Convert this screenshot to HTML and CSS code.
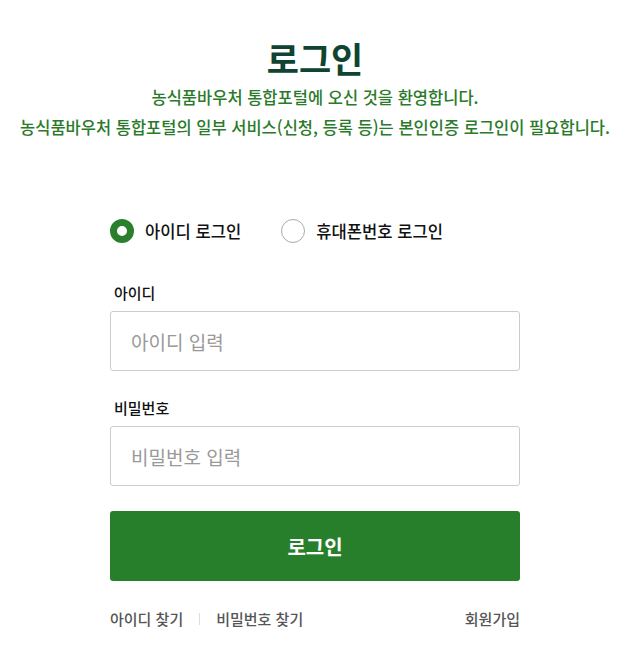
FILE: index.html
```html
<!DOCTYPE html>
<html lang="ko">
<head>
  <meta charset="UTF-8">
  <title>로그인</title>
  <link rel="stylesheet" href="styles.css">
</head>
<body>
  <div class="wrap">
    <div class="head">
      <h2>로그인</h2>
      <p>농식품바우처 통합포털에 오신 것을 환영합니다.<br>농식품바우처 통합포털의 일부 서비스(신청, 등록 등)는 본인인증 로그인이 필요합니다.</p>
    </div>

    <div class="form">
      <div class="radio-group">
        <label class="radio"><input type="radio" name="type" checked><span class="mark"></span>아이디 로그인</label>
        <label class="radio"><input type="radio" name="type"><span class="mark"></span>휴대폰번호 로그인</label>
      </div>

      <label class="field-label" for="userId">아이디</label>
      <input type="text" id="userId" class="field" placeholder="아이디 입력">

      <label class="field-label pw" for="userPw">비밀번호</label>
      <input type="password" id="userPw" class="field" placeholder="비밀번호 입력">

      <button class="btn-login">로그인</button>

      <div class="links">
        <a href="#">아이디 찾기</a>
        <span class="bar"></span>
        <a href="#">비밀번호 찾기</a>
        <a href="#" class="join">회원가입</a>
      </div>
    </div>
  </div>
</body>
</html>
```

FILE: styles.css
```css
body {
  margin: 0;
  font-family: "Noto Sans CJK KR", "Noto Sans", sans-serif;
  background: #fff;
  color: #111;
}
.wrap {
  width: 630px;
  padding-top: 36px;
}
.head {
  text-align: center;
}
.head h2 {
  margin: 0;
  font-size: 35px;
  line-height: 44px;
  font-weight: 700;
  color: #0e4430;
}
.head p {
  margin: 2px 0 0;
  font-size: 16.5px;
  line-height: 30px;
  font-weight: 500;
  color: #2a7a2a;
}
.form {
  width: 410px;
  margin: 77px auto 0;
}
.radio-group {
  display: flex;
  gap: 40px;
  height: 24px;
  align-items: center;
}
.radio {
  display: flex;
  align-items: center;
  gap: 11px;
  font-size: 16.6px;
  font-weight: 500;
  cursor: pointer;
}
.radio input {
  display: none;
}
.radio .mark {
  width: 24px;
  height: 24px;
  box-sizing: border-box;
  border-radius: 50%;
  border: 1px solid #aaa;
  background: #fff;
}
.radio input:checked + .mark {
  border: 7px solid #2a7f2d;
}
.field-label {
  display: block;
  margin-top: 40px;
  padding-left: 4px;
  font-size: 15px;
  line-height: 20px;
  font-weight: 500;
}
.field-label.pw {
  margin-top: 27px;
}
.field {
  display: block;
  box-sizing: border-box;
  width: 100%;
  height: 60px;
  margin-top: 8px;
  padding: 0 20px;
  border: 1px solid #ccc;
  border-radius: 3px;
  font-family: inherit;
  font-size: 19px;
}
.field::placeholder {
  color: #999;
}
.btn-login {
  display: block;
  width: 100%;
  height: 70px;
  margin-top: 25px;
  border: none;
  border-radius: 3px;
  background: #287f2b;
  color: #fff;
  font-family: inherit;
  font-size: 20px;
  font-weight: 700;
  cursor: pointer;
}
.links {
  display: flex;
  align-items: center;
  margin-top: 28px;
  font-size: 15px;
  line-height: 20px;
  font-weight: 500;
}
.links a {
  color: #555;
  text-decoration: none;
}
.links .bar {
  width: 1px;
  height: 12px;
  margin: 0 16px;
  background: #ddd;
}
.links .join {
  margin-left: auto;
}
```
